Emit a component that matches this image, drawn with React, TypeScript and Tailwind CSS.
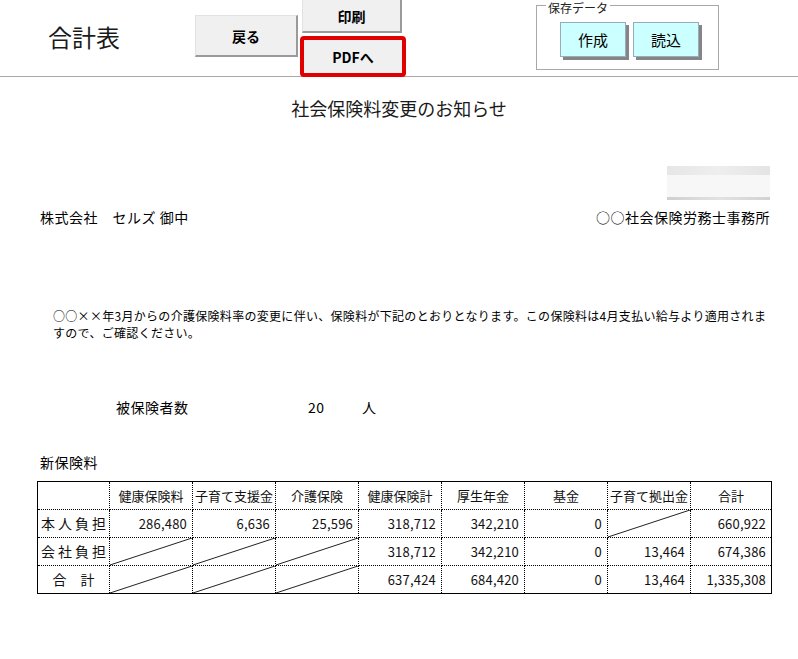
import React from 'react';

type Cell = string | null; // null = 斜線セル

interface Row {
    label: React.ReactNode;
    cells: Cell[];
}

const headers = ['健康保険料', '子育て支援金', '介護保険', '健康保険計', '厚生年金', '基金', '子育て拠出金', '合計'];

const rows: Row[] = [
    {
        label: (
            <span className="flex justify-between px-[3px]">
                <span>本</span><span>人</span><span>負</span><span>担</span>
            </span>
        ),
        cells: ['286,480', '6,636', '25,596', '318,712', '342,210', '0', null, '660,922'],
    },
    {
        label: (
            <span className="flex justify-between px-[3px]">
                <span>会</span><span>社</span><span>負</span><span>担</span>
            </span>
        ),
        cells: [null, null, null, '318,712', '342,210', '0', '13,464', '674,386'],
    },
    {
        label: <span className="block text-center">合　計</span>,
        cells: [null, null, null, '637,424', '684,420', '0', '13,464', '1,335,308'],
    },
];

const Slash: React.FC = () => (
    <svg className="absolute inset-0 h-full w-full" preserveAspectRatio="none" viewBox="0 0 100 100">
        <line x1="0" y1="100" x2="100" y2="0" stroke="#222" strokeWidth="1" vectorEffect="non-scaling-stroke" />
    </svg>
);

const PremiumTable: React.FC = () => (
    <table className="ml-[37px] w-[734px] table-fixed border-collapse border border-solid border-black text-[13px] leading-[27px] text-[#111]">
        <colgroup>
            <col className="w-[72px]" />
            <col className="w-[83px]" />
            <col className="w-[83px]" />
            <col className="w-[83px]" />
            <col className="w-[83px]" />
            <col className="w-[83px]" />
            <col className="w-[83px]" />
            <col className="w-[83px]" />
            <col className="w-[81px]" />
        </colgroup>
        <thead>
            <tr className="h-[27px]">
                <th className="border border-dotted border-black p-0 font-normal" />
                {headers.map((h) => (
                    <th key={h} className="whitespace-nowrap border border-dotted border-black p-0 text-center font-normal">
                        {h}
                    </th>
                ))}
            </tr>
        </thead>
        <tbody>
            {rows.map((r, i) => (
                <tr key={i} className="h-[28px]">
                    <td className="border border-dotted border-black p-0 text-[14px]">{r.label}</td>
                    {r.cells.map((c, j) =>
                        c === null ? (
                            <td key={j} className="relative border border-dotted border-black p-0">
                                <Slash />
                            </td>
                        ) : (
                            <td key={j} className="border border-dotted border-black p-0 pr-[5px] text-right tracking-[0.2px]">
                                {c}
                            </td>
                        )
                    )}
                </tr>
            ))}
        </tbody>
    </table>
);

export default function App() {
    return (
        <div className="h-[659px] w-[798px] overflow-hidden bg-white font-['Noto_Sans_CJK_JP',sans-serif] text-black">
            {/* ヘッダー */}
            <header className="flex h-[77px] items-start border-b border-[#a8a8a8]">
                <div className="w-[195px] pl-[48px] pt-[22px] text-[24px] leading-[30px] text-[#1a1a1a]">合計表</div>

                <button className="mt-[15px] h-[42px] w-[103px] border-t border-l border-[#e2e2e2] border-r-2 border-b-2 border-r-[#9a9a9a] border-b-[#9a9a9a] bg-[#f0f0f0] text-[14px] font-bold leading-none">
                    戻る
                </button>

                <div className="relative z-10 ml-[4px] flex w-[100px] flex-col">
                    <button className="h-[33px] w-[100px] border-l border-[#e2e2e2] border-r-2 border-b-2 border-r-[#9a9a9a] border-b-[#9a9a9a] bg-[#f0f0f0] text-[14px] font-bold leading-none">
                        印刷
                    </button>
                    <button className="mt-[3px] -ml-[2px] h-[41px] w-[106px] rounded-[4px] border-[4px] border-[#e10000] bg-[#f0f0f0] text-[14px] font-bold leading-none">
                        PDFへ
                    </button>
                </div>

                <div className="relative ml-[134px] mt-[5px] flex h-[65px] w-[183px] gap-[7px] border border-[#a8a8a8] pl-[23px] pt-[16px]">
                    <span className="absolute -top-[5px] left-[9px] bg-white px-[2px] text-[12px] leading-[13px] text-[#222]">保存データ</span>
                    <button className="h-[35px] w-[66px] border border-[#9ab] bg-[#ccffff] text-[15px] leading-none shadow-[3px_3px_0_#858585]">
                        作成
                    </button>
                    <button className="h-[35px] w-[66px] border border-[#9ab] bg-[#ccffff] text-[15px] leading-none shadow-[3px_3px_0_#858585]">
                        読込
                    </button>
                </div>
            </header>

            {/* 本文 */}
            <main className="flex flex-col">
                <h1 className="mt-[19px] text-center text-[18px] leading-[24px] text-[#1a1a1a]">社会保険料変更のお知らせ</h1>

                <div className="ml-auto mr-[28px] mt-[46px] flex h-[34px] w-[103px] flex-col blur-[0.6px]">
                    <div className="h-[9px] bg-gradient-to-r from-[#e6e6e6] via-[#eeeeee] to-[#e4e4e4]" />
                    <div className="h-[22px] bg-[#f7f7f7]" />
                    <div className="h-[3px] bg-gradient-to-r from-[#cfcfcf] via-[#e2e2e2] to-[#d2d2d2]" />
                </div>

                <div className="mt-[7px] flex justify-between px-[28px] pl-[40px] text-[14px] leading-[20px] tracking-[0.5px]">
                    <span>株式会社　セルズ 御中</span>
                    <span>○○社会保険労務士事務所</span>
                </div>

                <p className="ml-[53px] mt-[80px] whitespace-nowrap text-[12px] leading-[17px] tracking-[0.3px]">
                    ○○××年3月からの介護保険料率の変更に伴い、保険料が下記のとおりとなります。この保険料は4月支払い給与より適用されま
                    <br />
                    すので、ご確認ください。
                </p>

                <div className="mt-[56px] flex text-[14px] leading-[20px] tracking-[0.5px]">
                    <span className="ml-[116px] w-[192px]">被保険者数</span>
                    <span className="w-[54px]">20</span>
                    <span>人</span>
                </div>

                <div className="ml-[40px] mt-[35px] text-[14px] leading-[20px] tracking-[0.5px]">新保険料</div>

                <div className="mt-[9px]">
                    <PremiumTable />
                </div>
            </main>
        </div>
    );
}
